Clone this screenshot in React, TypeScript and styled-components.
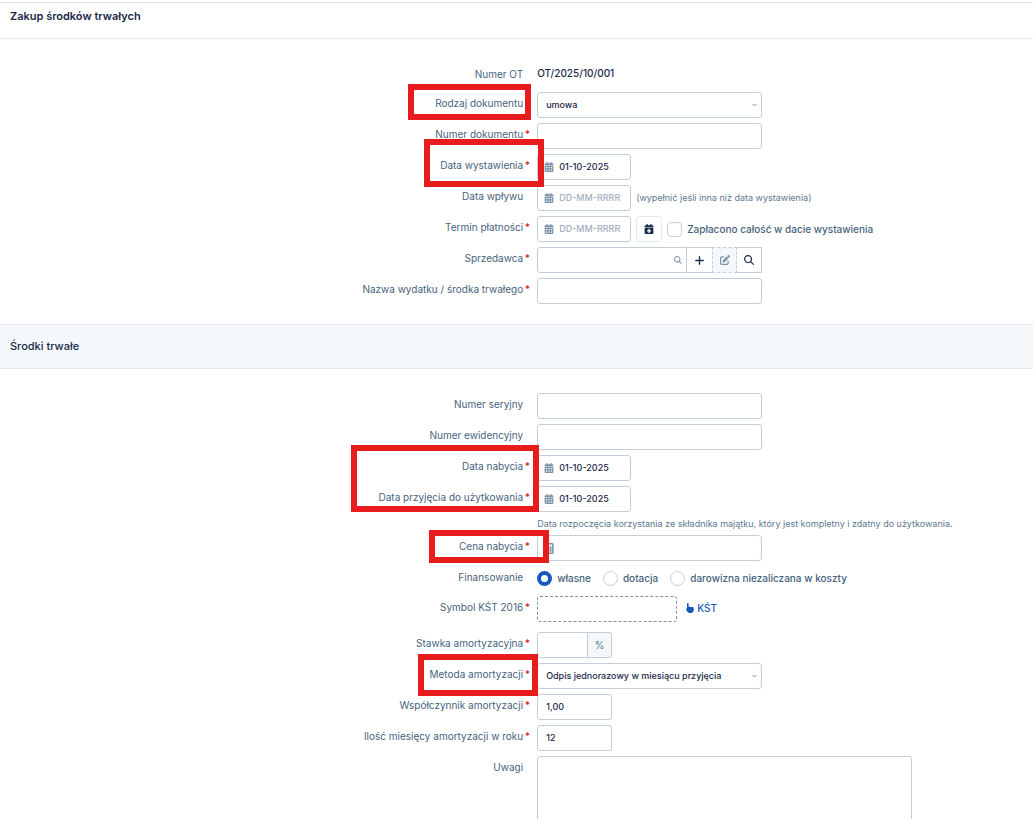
import React, { ReactNode } from "react";
import styled, { createGlobalStyle } from "styled-components";
import { FaCalendarAlt, FaCalendarPlus } from "react-icons/fa";
import { FaPlus, FaPenToSquare, FaMagnifyingGlass, FaCalculator } from "react-icons/fa6";

const color = {
  ink: "#1b2a49",
  label: "#47637d",
  muted: "#5d7990",
  line: "#c3ced9",
  soft: "#e6e9f0",
  panel: "#f4f8fb",
  icon: "#7d93a8",
  blue: "#1559c0",
  red: "#d92d2d",
  mark: "#e81c1c",
};

const GlobalStyle = createGlobalStyle`
  * { box-sizing: border-box; }
  body { margin: 0; background: #fff; overflow-x: hidden; }
  body, button {
    font-family: Inter, "Liberation Sans", sans-serif;
    font-size: 10px;
    color: ${color.ink};
  }
  input, select, textarea {
    font-family: Inter, "Liberation Sans", sans-serif;
    font-size: 9px;
    color: ${color.ink};
  }
  input::placeholder { color: #9fb0bf; opacity: 1; }
`;

const Page = styled.main`
  margin-top: 2px;
  border-top: 1px solid #dfe1e5;
`;

const Header = styled.header`
  padding: 3px 10px 12px;
  border-bottom: 1px solid ${color.soft};
`;

const Title = styled.h1`
  margin: 0;
  font-size: 11px;
  line-height: 20px;
  font-weight: 600;
`;

const SectionHeader = styled.header`
  padding: 12px 10px;
  background: ${color.panel};
  border: solid ${color.soft};
  border-width: 1px 0;
`;

const SectionTitle = styled.h2`
  margin: 0;
  font-size: 11px;
  line-height: 19px;
  font-weight: 500;
`;

const Fields = styled.div`
  display: flex;
  flex-direction: column;
  gap: 5px;
  padding: 24px 0 20px;
`;

const RowBox = styled.div<{ $height: number }>`
  display: grid;
  grid-template-columns: 52% 1fr;
  min-height: ${(p) => p.$height}px;
`;

const LabelCell = styled.div`
  position: relative;
  display: flex;
  justify-content: flex-end;
  padding-right: 7px;
  line-height: 22px;
  color: ${color.label};
  white-space: nowrap;
`;

const Star = styled.span`
  width: 7px;
  text-align: right;
  font-weight: 600;
  color: ${color.red};
`;

const Controls = styled.div`
  display: flex;
  align-items: flex-start;
  gap: 5px;
`;

const Mark = styled.span<{ $top: number; $right: number; $width: number; $height: number }>`
  position: absolute;
  z-index: 2;
  top: ${(p) => p.$top}px;
  right: ${(p) => p.$right}px;
  width: ${(p) => p.$width}px;
  height: ${(p) => p.$height}px;
  border: 6px solid ${color.mark};
  pointer-events: none;
`;

const Input = styled.input<{ $width?: number; $dashed?: boolean }>`
  width: ${(p) => p.$width ?? 225}px;
  height: 26px;
  padding: 0 8px 1px;
  border: 1px ${(p) => (p.$dashed ? `dashed ${color.icon}` : `solid ${color.line}`)};
  border-radius: 3px;
  background: #fff;
  font-weight: 500;
  outline: none;
`;

const Select = styled.select`
  width: 225px;
  height: 26px;
  padding: 0 8px 1px;
  border: 1px solid ${color.line};
  border-radius: 3px;
  background: #fff;
  font-weight: 500;
  appearance: none;
`;

const Holder = styled.div`
  position: relative;
  display: flex;
`;

const Inside = styled.span<{ $side: "left" | "right" }>`
  position: absolute;
  top: 0;
  bottom: 0;
  ${(p) => (p.$side === "left" ? "left: 7px" : "right: 5px")};
  display: flex;
  align-items: center;
  color: ${color.icon};
  pointer-events: none;
`;

const IconInput = styled(Input)`
  padding: 0 4px 1px 21px;
`;

const Group = styled.div`
  display: flex;
`;

const SearchInput = styled(Input)`
  border-radius: 3px 0 0 3px;
`;

const GroupButton = styled.button`
  display: flex;
  align-items: center;
  justify-content: center;
  width: 25px;
  height: 26px;
  padding: 0;
  border: 1px solid ${color.line};
  border-left: 0;
  background: #fff;
`;

const AddButton = styled(GroupButton)`
  border-right: 0;
`;

const EditButton = styled(GroupButton)`
  border: 1px dashed ${color.line};
  background: ${color.panel};
  color: ${color.icon};
`;

const SquareButton = styled.button`
  display: flex;
  align-items: center;
  justify-content: center;
  width: 26px;
  height: 26px;
  padding: 0;
  border: 1px solid ${color.soft};
  border-radius: 3px;
  background: #fff;
`;

const Suffix = styled.span`
  width: 24px;
  height: 26px;
  border: 1px solid ${color.line};
  border-left: 0;
  border-radius: 0 3px 3px 0;
  background: ${color.panel};
  color: ${color.muted};
  line-height: 24px;
  text-align: center;
`;

const Value = styled.span`
  line-height: 21px;
  font-weight: 500;
`;

const Note = styled.span`
  font-size: 9px;
  line-height: 25px;
  color: ${color.muted};
  white-space: nowrap;
`;

const Help = styled.p`
  margin: 5px 0 0;
  font-size: 9px;
  line-height: 13px;
  color: ${color.muted};
  white-space: nowrap;
`;

const Choice = styled.label`
  display: flex;
  align-items: center;
  gap: 5px;
  margin-right: 7px;
  line-height: 24px;
  font-weight: 500;
  color: ${color.label};
  white-space: nowrap;
`;

const CheckLine = styled(Choice)`
  line-height: 26px;
`;

const Tick = styled.input`
  appearance: none;
  width: 15px;
  height: 15px;
  margin: 0;
  border: 1px solid ${color.line};
  border-radius: 4px;
  background: #fff;
`;

const Radio = styled(Tick)`
  border-radius: 50%;
  &:checked { border: 4px solid ${color.blue}; }
`;

const PickLink = styled.a`
  display: flex;
  align-items: center;
  gap: 3px;
  margin-left: 4px;
  line-height: 24px;
  font-weight: 500;
  color: ${color.blue};
  text-decoration: none;
`;

const Area = styled.textarea`
  width: 375px;
  height: 80px;
  padding: 8px;
  border: 1px solid ${color.line};
  border-radius: 3px;
  resize: none;
`;

type Frame = { top: number; right: number; width: number; height: number };

function Row({ label, id, required, mark, height = 26, children }: {
  label: string; id?: string; required?: boolean; mark?: Frame; height?: number; children: ReactNode;
}) {
  return (
    <RowBox $height={height}>
      <LabelCell>
        {id ? <label htmlFor={id}>{label}</label> : <span>{label}</span>}
        <Star>{required ? "*" : ""}</Star>
        {mark && <Mark $top={mark.top} $right={mark.right} $width={mark.width} $height={mark.height} />}
      </LabelCell>
      <Controls>{children}</Controls>
    </RowBox>
  );
}

function DateField({ id, value }: { id: string; value?: string }) {
  return (
    <Holder>
      <IconInput id={id} $width={94} defaultValue={value} placeholder="DD-MM-RRRR" />
      <Inside $side="left"><FaCalendarAlt size={10} /></Inside>
    </Holder>
  );
}

function Picker({ id, option }: { id: string; option: string }) {
  return (
    <Holder>
      <Select id={id}><option>{option}</option></Select>
      <Inside $side="right">
        <svg width="5" height="4" viewBox="0 0 5 4" fill="none" stroke="currentColor">
          <path d="M.5 1l2 2 2-2" />
        </svg>
      </Inside>
    </Holder>
  );
}

function PointingHand() {
  return (
    <svg width="8" height="10" viewBox="0 0 8 10" fill="currentColor" aria-hidden="true">
      <path d="M1 .8a.8.8 0 0 1 1.600 0V4l.6-.4.8.5.8-.3.8.5.8-.2c.8 0 1.400.5 1.400 1.200v1.400C7.800 8.700 6.600 10 4.700 10H3.600c-.7 0-1.300-.3-1.700-.8L.2 7C-.2 6.400.1 5.600.8 5.500L1 5.500z" />
    </svg>
  );
}

export default function App() {
  return (
    <>
      <GlobalStyle />
      <Page>
        <Header><Title>Zakup środków trwałych</Title></Header>
        <Fields>
          <Row label="Numer OT" height={24}><Value>OT/2025/10/001</Value></Row>
          <Row label="Rodzaj dokumentu" id="kind" mark={{ top: -8, right: 6, width: 123, height: 36 }}>
            <Picker id="kind" option="umowa" />
          </Row>
          <Row label="Numer dokumentu" id="number" required><Input id="number" /></Row>
          <Row label="Data wystawienia" id="issued" required mark={{ top: -15, right: -7, width: 120, height: 48 }}>
            <DateField id="issued" value="01-10-2025" />
          </Row>
          <Row label="Data wpływu" id="received">
            <DateField id="received" />
            <Note>(wypełnić jeśli inna niż data wystawienia)</Note>
          </Row>
          <Row label="Termin płatności" id="due" required>
            <DateField id="due" />
            <SquareButton type="button" aria-label="Dodaj termin"><FaCalendarPlus size={10} /></SquareButton>
            <CheckLine><Tick type="checkbox" />Zapłacono całość w dacie wystawienia</CheckLine>
          </Row>
          <Row label="Sprzedawca" id="seller" required>
            <Group>
              <Holder>
                <SearchInput id="seller" $width={150} />
                <Inside $side="right"><FaMagnifyingGlass size={8} /></Inside>
              </Holder>
              <AddButton type="button" aria-label="Dodaj"><FaPlus size={11} /></AddButton>
              <EditButton type="button" aria-label="Edytuj"><FaPenToSquare size={10} /></EditButton>
              <GroupButton type="button" aria-label="Szukaj"><FaMagnifyingGlass size={10} /></GroupButton>
            </Group>
          </Row>
          <Row label="Nazwa wydatku / środka trwałego" id="name" required><Input id="name" /></Row>
        </Fields>

        <SectionHeader><SectionTitle>Środki trwałe</SectionTitle></SectionHeader>
        <Fields>
          <Row label="Numer seryjny" id="serial"><Input id="serial" /></Row>
          <Row label="Numer ewidencyjny" id="record"><Input id="record" /></Row>
          <Row label="Data nabycia" id="bought" required mark={{ top: -10, right: -2, width: 188, height: 67 }}>
            <DateField id="bought" value="01-10-2025" />
          </Row>
          <Row label="Data przyjęcia do użytkowania" id="accepted" required>
            <div>
              <DateField id="accepted" value="01-10-2025" />
              <Help>Data rozpoczęcia korzystania ze składnika majątku, który jest kompletny i zdatny do użytkowania.</Help>
            </div>
          </Row>
          <Row label="Cena nabycia" id="price" required mark={{ top: -5, right: -12, width: 120, height: 33 }}>
            <Holder>
              <IconInput id="price" />
              <Inside $side="left"><FaCalculator size={11} /></Inside>
            </Holder>
          </Row>
          <Row label="Finansowanie" height={25}>
            <Choice><Radio type="radio" name="funding" defaultChecked />własne</Choice>
            <Choice><Radio type="radio" name="funding" />dotacja</Choice>
            <Choice><Radio type="radio" name="funding" />darowizna niezaliczana w koszty</Choice>
          </Row>
          <Row label="Symbol KŚT 2016" id="symbol" required height={31}>
            <Input id="symbol" $width={140} $dashed />
            <PickLink href="#kst"><PointingHand />KŚT</PickLink>
          </Row>
          <Row label="Stawka amortyzacyjna" id="rate" required>
            <Group><SearchInput id="rate" $width={51} /><Suffix>%</Suffix></Group>
          </Row>
          <Row label="Metoda amortyzacji" id="method" required mark={{ top: -9, right: -1, width: 120, height: 42 }}>
            <Picker id="method" option="Odpis jednorazowy w miesiącu przyjęcia" />
          </Row>
          <Row label="Współczynnik amortyzacji" id="factor" required><Input id="factor" $width={75} defaultValue="1,00" /></Row>
          <Row label="Ilość miesięcy amortyzacji w roku" id="months" required><Input id="months" $width={75} defaultValue="12" /></Row>
          <Row label="Uwagi" id="remarks"><Area id="remarks" /></Row>
        </Fields>
      </Page>
    </>
  );
}
